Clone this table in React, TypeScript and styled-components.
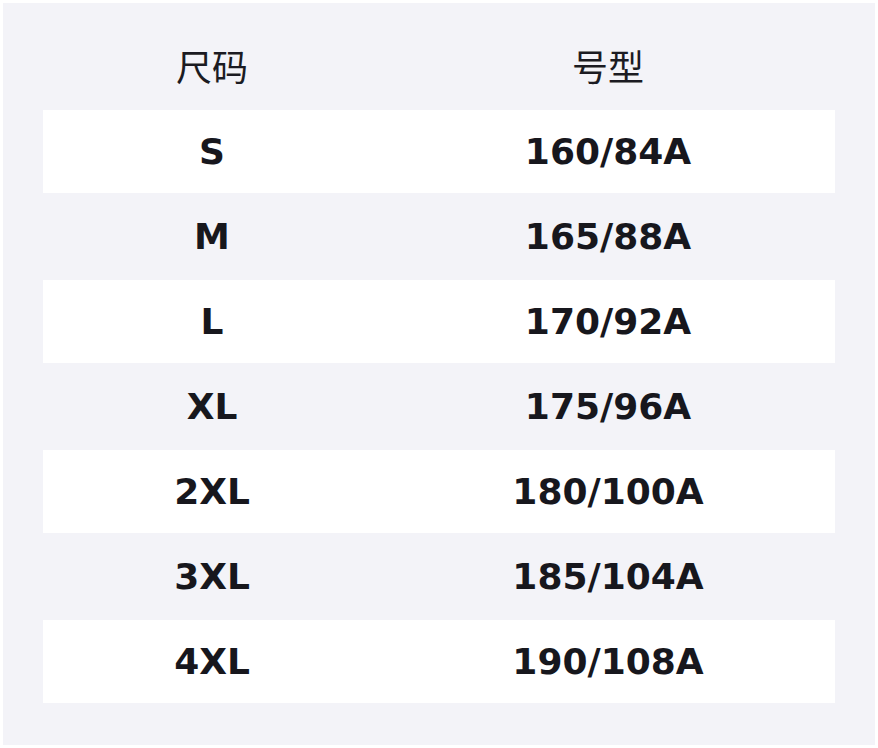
import styled, { createGlobalStyle } from 'styled-components';

const GlobalStyle = createGlobalStyle`
  html, body {
    margin: 0;
    padding: 0;
    background: #ffffff;
  }
  body {
    font-family: 'DejaVu Sans', 'Noto Sans CJK SC', sans-serif;
  }
`;

const Page = styled.div`
  padding: 3px;
`;

const Panel = styled.div`
  background: #f3f3f8;
  padding: 40px;
`;

const Table = styled.table`
  width: 100%;
  border-collapse: separate;
  border-spacing: 0 2px;
  table-layout: fixed;
  color: #17171d;
`;

const HeadCell = styled.th<{ $width?: number }>`
  width: ${(p) => (p.$width ? `${p.$width}px` : 'auto')};
  padding: 2px 0 25px;
  font-family: 'Noto Sans CJK SC', 'DejaVu Sans', sans-serif;
  font-size: 36px;
  font-weight: 400;
  line-height: 36px;
  text-align: center;
  vertical-align: top;
  color: #1b1b22;
`;

const Row = styled.tr<{ $striped: boolean }>`
  background: ${(p) => (p.$striped ? '#ffffff' : 'transparent')};
`;

const Cell = styled.td`
  height: 83px;
  padding: 0;
  font-size: 36px;
  font-weight: 700;
  text-align: center;
  vertical-align: middle;
`;

const sizes = [
  { size: 'S', fit: '160/84A' },
  { size: 'M', fit: '165/88A' },
  { size: 'L', fit: '170/92A' },
  { size: 'XL', fit: '175/96A' },
  { size: '2XL', fit: '180/100A' },
  { size: '3XL', fit: '185/104A' },
  { size: '4XL', fit: '190/108A' },
];

export default function App() {
  return (
    <>
      <GlobalStyle />
      <Page>
        <Panel>
          <Table>
            <thead>
              <tr>
                <HeadCell $width={338}>尺码</HeadCell>
                <HeadCell>号型</HeadCell>
              </tr>
            </thead>
            <tbody>
              {sizes.map((s, i) => (
                <Row key={s.size} $striped={i % 2 === 0}>
                  <Cell>{s.size}</Cell>
                  <Cell>{s.fit}</Cell>
                </Row>
              ))}
            </tbody>
          </Table>
        </Panel>
      </Page>
    </>
  );
}
